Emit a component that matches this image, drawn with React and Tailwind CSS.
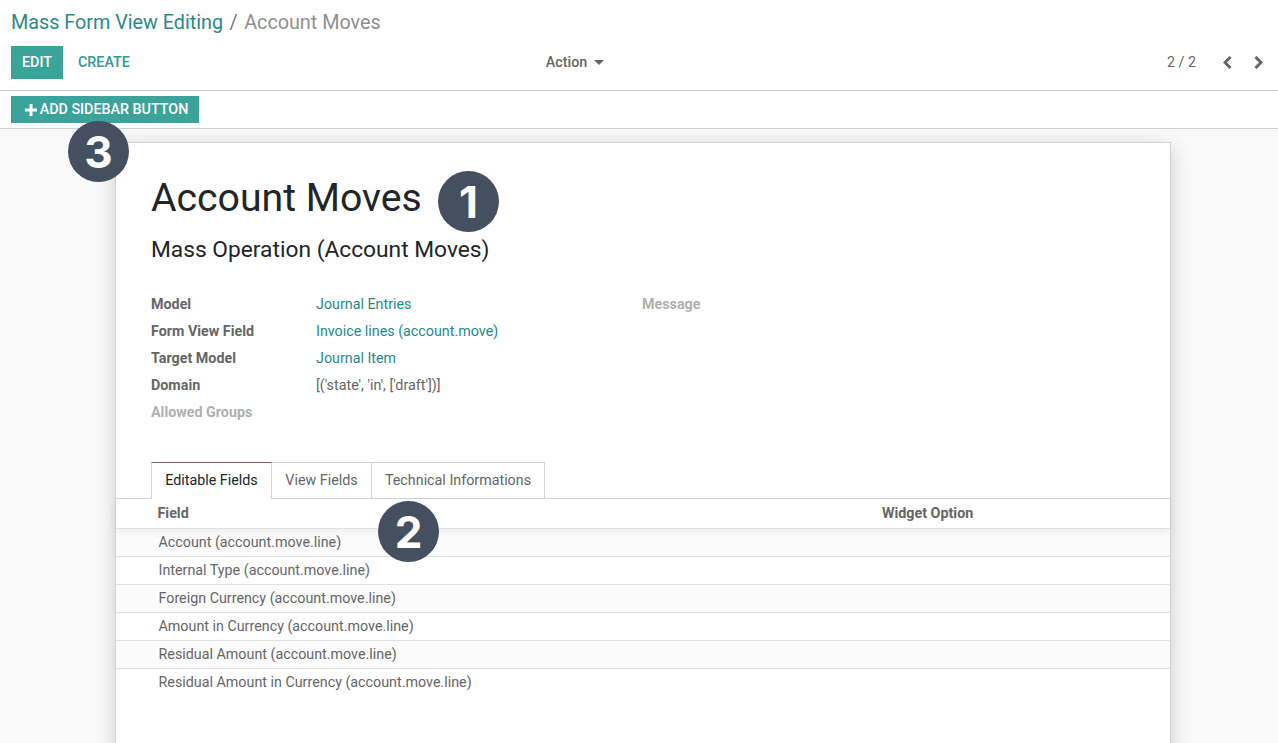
const TEAL = "text-[#2f9a94]";

const leftFields = [
  { label: "Model", value: "Journal Entries", link: true },
  { label: "Form View Field", value: "Invoice lines (account.move)", link: true },
  { label: "Target Model", value: "Journal Item", link: true },
  { label: "Domain", value: "[('state', 'in', ['draft'])]" },
  { label: "Allowed Groups", muted: true },
];

const rows = [
  "Account (account.move.line)",
  "Internal Type (account.move.line)",
  "Foreign Currency (account.move.line)",
  "Amount in Currency (account.move.line)",
  "Residual Amount (account.move.line)",
  "Residual Amount in Currency (account.move.line)",
];

function Badge({ n, className }) {
  return (
    <div
      className={`absolute z-10 flex h-[61px] w-[61px] items-center justify-center rounded-full bg-[#444f5f] text-[44px] font-bold text-white [font-family:Inter,sans-serif] ${className}`}
    >
      {n}
    </div>
  );
}

function Chevron({ points, className }) {
  return (
    <svg width="9" height="13" viewBox="0 0 9 13" fill="none" className={className}>
      <polyline points={points} stroke="#666" strokeWidth="3" />
    </svg>
  );
}

export default function App() {
  return (
    <div className="relative flex h-[743px] flex-col overflow-hidden bg-white text-[14.3px] text-[#666] [font-family:Roboto,sans-serif]">
      <header className="h-[91px] shrink-0 border-b border-[#c8c8cc] px-[11px] pt-[10px]">
        <div className="flex h-[26px] items-center text-[19.75px] leading-[26px]">
          <span className="text-[#2a8a8a]">Mass Form View Editing</span>
          <span className="mx-[6.5px] text-[#777]">/</span>
          <span className="text-[#8f8f8f]">Account Moves</span>
        </div>
        <div className="mt-[10px] flex h-[33px] items-center">
          <button className="h-[33px] w-[52px] bg-[#3aa39a] font-medium text-white">EDIT</button>
          <button className={`ml-[15px] font-medium ${TEAL}`}>CREATE</button>
          <div className="ml-[416px] flex items-center">
            <span className="font-medium text-[#666]">Action</span>
            <span className="ml-[7px] h-0 w-0 border-x-[5px] border-t-[5px] border-x-transparent border-t-[#666]" />
          </div>
          <span className="ml-auto text-[#666]">2 / 2</span>
          <Chevron points="7.5,1 2,6.5 7.5,12" className="ml-[27px]" />
          <Chevron points="1.5,1 7,6.5 1.5,12" className="ml-[22px] mr-[4px]" />
        </div>
      </header>

      <div className="h-[38px] shrink-0 border-b border-[#cbd0d8] px-[11px] pt-[5px]">
        <button className="flex h-[27px] w-[188px] items-center justify-center bg-[#3aa39a] pl-[3px] font-medium text-white">
          <svg width="12" height="12" viewBox="0 0 12 12" className="mr-[3px]">
            <path d="M6 0v12M0 6h12" stroke="#fff" strokeWidth="3" />
          </svg>
          ADD SIDEBAR BUTTON
        </button>
      </div>

      <main className="flex-1 bg-[#f9f9f9] pl-[115px] pr-[107px] pt-[13px]">
        <section className="h-[640px] border border-[#cfd3da] bg-white shadow-[0_5px_20px_-1px_rgba(0,0,0,0.2)]">
          <div className="px-[35px] pt-[30px]">
            <h1 className="text-[39.2px] leading-[50px] text-[#212529]">Account Moves</h1>
            <h2 className="mt-[12px] text-[22.75px] leading-[30px] text-[#212529]">Mass Operation (Account Moves)</h2>

            <div className="mt-[26px] flex">
              <div className="w-[491px]">
                {leftFields.map((field) => (
                  <div key={field.label} className="flex h-[27px] items-center">
                    <span className={`w-[165px] font-bold ${field.muted ? "text-[#b0b0b0]" : "text-[#666]"}`}>
                      {field.label}
                    </span>
                    {field.value && (
                      <span className={field.link ? "text-[#1f8a8c]" : "text-[#666]"}>{field.value}</span>
                    )}
                  </div>
                ))}
              </div>
              <div className="flex h-[27px] items-center font-bold text-[#b0b0b0]">Message</div>
            </div>

            <div className="mt-[36px] flex h-[37px] items-stretch">
              <div className="relative z-[1] flex h-[37px] w-[121px] items-center justify-center border-x border-t border-x-[#cfd3da] border-t-[#875a7b] bg-white pb-px text-[#212529]">
                Editable Fields
              </div>
              <div className="flex h-[36px] w-[100px] items-center justify-center border-r border-t border-[#cfd3da]">
                View Fields
              </div>
              <div className="flex h-[36px] w-[173px] items-center justify-center border-r border-t border-[#cfd3da]">
                Technical Informations
              </div>
            </div>
          </div>

          <div className="-mt-px border-t border-[#cfd3da]">
            <div className="relative flex h-[30px] items-center border-b border-[#dee2e6] pl-[41.5px] font-bold shadow-[0_3px_8px_rgba(0,0,0,0.06)]">
              <span className="w-[724.5px]">Field</span>
              <span>Widget Option</span>
            </div>
            {rows.map((row, i) => (
              <div
                key={row}
                className={`flex h-[28px] items-center border-b pl-[42.5px] ${i % 2 === 0 ? "bg-[#fbfbfb]" : "bg-white"} ${i < rows.length - 1 ? "border-[#dee2e6]" : "border-transparent"}`}
              >
                {row}
              </div>
            ))}
          </div>
        </section>
      </main>

      <Badge n="3" className="left-[68px] top-[121px]" />
      <Badge n="1" className="left-[438px] top-[171px]" />
      <Badge n="2" className="left-[378px] top-[501px]" />
    </div>
  );
}
